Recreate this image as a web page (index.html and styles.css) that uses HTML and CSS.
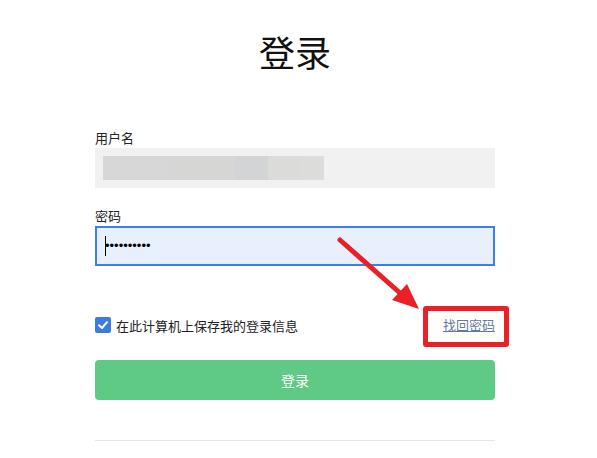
FILE: index.html
```html
<!DOCTYPE html>
<html lang="zh">
<head>
<meta charset="utf-8">
<link rel="stylesheet" href="styles.css">
</head>
<body>
<div class="page">
  <h1 class="title">登录</h1>
  <div class="field">
    <div class="label">用户名</div>
    <div class="input input-user">
      <div class="blur">
        <span class="seg s1"></span><span class="seg s2"></span><span class="seg s3"></span><span class="seg s4"></span><span class="seg s5"></span>
      </div>
    </div>
  </div>
  <div class="field field-pw">
    <div class="label">密码</div>
    <div class="input input-pw"><span class="caret"></span><span class="dots">••••••••••</span></div>
  </div>
  <div class="row">
    <label class="remember">
      <span class="check"><svg viewBox="0 0 16 16" width="16" height="16"><path d="M4 8.2 L7 11 L12 5.2" fill="none" stroke="#fff" stroke-width="2" stroke-linecap="round" stroke-linejoin="round"/></svg></span>
      <span class="remember-text">在此计算机上保存我的登录信息</span>
    </label>
    <a class="forgot">找回密码<span class="highlight"></span></a>
  </div>
  <button class="submit">登录</button>
  <div class="divider"></div>
</div>
<svg class="arrow" width="597" height="458" viewBox="0 0 597 458">
  <line x1="340" y1="240" x2="400" y2="293" stroke="#ea2027" stroke-width="5" stroke-linecap="round"/>
  <polygon points="392,300 407,284 419,309" fill="#ea2027"/>
</svg>
</body>
</html>
```

FILE: styles.css
```css
html, body {
  margin: 0;
  padding: 0;
  background: #ffffff;
}
body {
  font-family: "Noto Sans CJK SC", "Liberation Sans", sans-serif;
  color: #222;
  width: 597px;
  height: 458px;
  overflow: hidden;
  position: relative;
}
.page {
  width: 400px;
  padding-left: 95px;
  padding-top: 33px;
  display: flex;
  flex-direction: column;
}
.title {
  margin: 0;
  font-size: 36px;
  line-height: 36px;
  font-weight: 400;
  text-align: center;
  color: #111;
}
.field {
  margin-top: 60px;
  display: flex;
  flex-direction: column;
  gap: 1px;
}
.field-pw {
  margin-top: 19px;
}
.label {
  font-size: 13px;
  line-height: 18px;
  color: #222;
}
.input {
  height: 40px;
  box-sizing: border-box;
  display: flex;
  align-items: center;
}
.input-user {
  background: #f1f1f1;
  padding-left: 8px;
}
.blur {
  display: flex;
  height: 24px;
}
.seg { display: block; height: 24px; }
.s1 { width: 66px; background: #d7d7d7; }
.s2 { width: 66px; background: #d6d6d5; }
.s3 { width: 33px; background: #d3d4d5; }
.s4 { width: 32px; background: #dbdbda; }
.s5 { width: 24px; background: #dcdcdb; }
.input-pw {
  background: #e8f0fe;
  border: 2px solid #3b7ef0;
  padding-left: 8px;
}
.caret {
  display: block;
  width: 1px;
  height: 20px;
  background: #000;
}
.dots {
  font-family: "Liberation Sans", sans-serif;
  font-size: 13px;
  color: #000;
  margin-left: -1px;
  line-height: 20px;
}
.row {
  margin-top: 44px;
  height: 30px;
  display: flex;
  align-items: center;
  justify-content: space-between;
}
.remember {
  display: flex;
  align-items: center;
  gap: 5px;
  font-size: 13px;
  color: #222;
}
.check {
  width: 16px;
  height: 16px;
  border-radius: 2px;
  background: #3b7ddd;
  display: block;
}
.check svg { display: block; }
.forgot {
  position: relative;
  font-size: 13px;
  color: #66789a;
  text-decoration: underline;
  margin-right: 0;
  line-height: 18px;
}
.highlight {
  position: absolute;
  left: -20px;
  top: -10px;
  width: 86px;
  height: 41px;
  box-sizing: border-box;
  border: 5px solid #ea2027;
  border-radius: 3px;
}
.submit {
  margin-top: 20px;
  height: 40px;
  border: none;
  border-radius: 4px;
  background: #5fca85;
  color: #fff;
  font-family: "Noto Sans CJK SC", sans-serif;
  font-size: 14px;
  padding: 0;
}
.divider {
  margin-top: 40px;
  height: 1px;
  background: #e5e5e5;
}
.arrow {
  position: absolute;
  left: 0;
  top: 0;
  pointer-events: none;
}
```
